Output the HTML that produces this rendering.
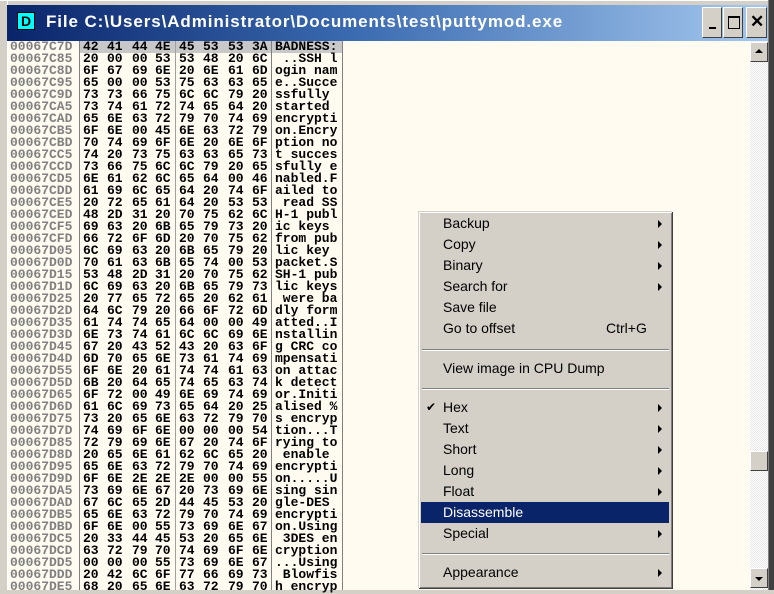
<!DOCTYPE html>
<html><head><style>
body{margin:0;width:774px;height:590px;overflow:hidden;background:#d4d0c8;position:relative;font-family:"Liberation Sans",sans-serif}
.a{position:absolute}
#tb{left:7px;top:5px;width:767px;height:36px;background:linear-gradient(90deg,#0a246a 0%,#3a6ab0 45%,#a6caf0 100%)}
.btn{position:absolute;top:7px;width:20px;height:31px;background:#d4d0c8;border-top:1px solid #fff;border-left:1px solid #fff;border-right:1px solid #404040;border-bottom:1px solid #404040;box-sizing:border-box}
#ct{left:8px;top:41px;width:742px;height:549px;background:#fffbf0}
.row{position:absolute;left:0;height:12px;width:340px;font:bold 13px/12px "Liberation Mono",monospace;white-space:pre}
.row span{position:absolute;top:0}
.ad{left:2px;color:#808080}
.as{left:267px;color:#000}
.vl{position:absolute;top:0;width:1px;height:549px;background:#808080}
#menu{left:418px;top:211px;width:253px;height:376px;background:#d4d0c8;border-top:1px solid #d4d0c8;border-left:1px solid #d4d0c8;box-shadow:inset 1px 1px #fff,1px 1px #404040,inset -1px -1px #808080}
.mi{position:absolute;left:24px;font-size:14px;line-height:21px;color:#000}
.ar{position:absolute;left:239px;width:0;height:0;border-left:4px solid #000;border-top:4px solid transparent;border-bottom:4px solid transparent}
.sep{position:absolute;left:3px;width:247px;height:0;border-top:1px solid #808080;border-bottom:1px solid #fff}
</style></head><body>
<div class="a" style="left:0;top:0;width:774px;height:1px;background:#fff"></div>
<div class="a" style="left:7px;top:0;width:1px;height:590px;background:#fff"></div>
<div id="tb" class="a">
<div class="a" style="left:10px;top:7px;width:16px;height:16px;background:#00ffff;border:1px solid #000;font:bold 14px/16px 'Liberation Sans',sans-serif;text-align:center;color:#000">D</div>
<div class="a" style="left:39px;top:7px;color:#fff;font:bold 17px/20px 'Liberation Sans',sans-serif;letter-spacing:0.9px;white-space:nowrap">File C:\Users\Administrator\Documents\test\puttymod.exe</div>
</div>
<div class="btn" style="left:702px"><div class="a" style="left:6px;top:19px;width:7px;height:2px;background:#000"></div></div>
<div class="btn" style="left:723px"><div class="a" style="left:4px;top:8px;width:10px;height:10px;border:1px solid #000;border-top-width:2px"></div></div>
<div class="btn" style="left:746px;width:21px"><div class="a" style="left:3px;top:3px;font:bold 17px/22px 'Liberation Sans',sans-serif">✕</div></div>
<div class="a" style="left:768px;top:0;width:6px;height:590px;background:#404040;border-left:1px solid #808080"></div>
<div id="ct" class="a">
<div class="a" style="left:72px;top:0;width:262px;height:12px;background:#c8c8c8"></div>
<div class="vl" style="left:71px"></div>
<div class="vl" style="left:167px;background:#a0a0a0"></div>
<div class="vl" style="left:263px"></div>
<div class="vl" style="left:334px"></div>
<div id="rows"></div>
</div>
<div class="a" style="left:750px;top:41px;width:18px;height:549px;background:repeating-conic-gradient(#e8e8e8 0 25%,#fff 0 50%) 0 0/2px 2px"></div>
<div class="btn" style="left:750px;top:42px;width:18px;height:20px"><div class="a" style="left:4px;top:6px;border-bottom:4px solid #000;border-left:4px solid transparent;border-right:4px solid transparent"></div></div>
<div class="btn" style="left:750px;top:451px;width:18px;height:20px"></div>
<div class="btn" style="left:750px;top:568px;width:18px;height:20px"><div class="a" style="left:4px;top:8px;border-top:4px solid #000;border-left:4px solid transparent;border-right:4px solid transparent"></div></div>
<div id="menu" class="a">
<div class="mi" style="top:1px">Backup</div><div class="ar" style="top:8px"></div>
<div class="mi" style="top:22px">Copy</div><div class="ar" style="top:29px"></div>
<div class="mi" style="top:43px">Binary</div><div class="ar" style="top:50px"></div>
<div class="mi" style="top:64px">Search for</div><div class="ar" style="top:71px"></div>
<div class="mi" style="top:85px">Save file</div>
<div class="mi" style="top:106px">Go to offset</div><div class="mi" style="top:106px;left:187px">Ctrl+G</div>
<div class="sep" style="top:137px"></div>
<div class="mi" style="top:146px">View image in CPU Dump</div>
<div class="sep" style="top:176px"></div>
<div class="mi" style="top:185px;left:7px;font-size:12px">✔</div>
<div class="mi" style="top:185px">Hex</div><div class="ar" style="top:192px"></div>
<div class="mi" style="top:206px">Text</div><div class="ar" style="top:213px"></div>
<div class="mi" style="top:227px">Short</div><div class="ar" style="top:234px"></div>
<div class="mi" style="top:248px">Long</div><div class="ar" style="top:255px"></div>
<div class="mi" style="top:269px">Float</div><div class="ar" style="top:276px"></div>
<div class="a" style="left:2px;top:290px;width:248px;height:21px;background:#0a246a"></div>
<div class="mi" style="top:290px;color:#fff">Disassemble</div>
<div class="mi" style="top:311px">Special</div><div class="ar" style="top:318px"></div>
<div class="sep" style="top:341px"></div>
<div class="mi" style="top:350px">Appearance</div><div class="ar" style="top:357px"></div>
</div>
<script>
var d=[["7C7D","42 41 44 4E 45 53 53 3A","BADNESS:"],["7C85","20 00 00 53 53 48 20 6C"," ..SSH l"],["7C8D","6F 67 69 6E 20 6E 61 6D","ogin nam"],["7C95","65 00 00 53 75 63 63 65","e..Succe"],["7C9D","73 73 66 75 6C 6C 79 20","ssfully "],["7CA5","73 74 61 72 74 65 64 20","started "],["7CAD","65 6E 63 72 79 70 74 69","encrypti"],["7CB5","6F 6E 00 45 6E 63 72 79","on.Encry"],["7CBD","70 74 69 6F 6E 20 6E 6F","ption no"],["7CC5","74 20 73 75 63 63 65 73","t succes"],["7CCD","73 66 75 6C 6C 79 20 65","sfully e"],["7CD5","6E 61 62 6C 65 64 00 46","nabled.F"],["7CDD","61 69 6C 65 64 20 74 6F","ailed to"],["7CE5","20 72 65 61 64 20 53 53"," read SS"],["7CED","48 2D 31 20 70 75 62 6C","H-1 publ"],["7CF5","69 63 20 6B 65 79 73 20","ic keys "],["7CFD","66 72 6F 6D 20 70 75 62","from pub"],["7D05","6C 69 63 20 6B 65 79 20","lic key "],["7D0D","70 61 63 6B 65 74 00 53","packet.S"],["7D15","53 48 2D 31 20 70 75 62","SH-1 pub"],["7D1D","6C 69 63 20 6B 65 79 73","lic keys"],["7D25","20 77 65 72 65 20 62 61"," were ba"],["7D2D","64 6C 79 20 66 6F 72 6D","dly form"],["7D35","61 74 74 65 64 00 00 49","atted..I"],["7D3D","6E 73 74 61 6C 6C 69 6E","nstallin"],["7D45","67 20 43 52 43 20 63 6F","g CRC co"],["7D4D","6D 70 65 6E 73 61 74 69","mpensati"],["7D55","6F 6E 20 61 74 74 61 63","on attac"],["7D5D","6B 20 64 65 74 65 63 74","k detect"],["7D65","6F 72 00 49 6E 69 74 69","or.Initi"],["7D6D","61 6C 69 73 65 64 20 25","alised %"],["7D75","73 20 65 6E 63 72 79 70","s encryp"],["7D7D","74 69 6F 6E 00 00 00 54","tion...T"],["7D85","72 79 69 6E 67 20 74 6F","rying to"],["7D8D","20 65 6E 61 62 6C 65 20"," enable "],["7D95","65 6E 63 72 79 70 74 69","encrypti"],["7D9D","6F 6E 2E 2E 2E 00 00 55","on.....U"],["7DA5","73 69 6E 67 20 73 69 6E","sing sin"],["7DAD","67 6C 65 2D 44 45 53 20","gle-DES "],["7DB5","65 6E 63 72 79 70 74 69","encrypti"],["7DBD","6F 6E 00 55 73 69 6E 67","on.Using"],["7DC5","20 33 44 45 53 20 65 6E"," 3DES en"],["7DCD","63 72 79 70 74 69 6F 6E","cryption"],["7DD5","00 00 00 55 73 69 6E 67","...Using"],["7DDD","20 42 6C 6F 77 66 69 73"," Blowfis"],["7DE5","68 20 65 6E 63 72 79 70","h encryp"]];
var xs=[75,99,124,147,171,195,220,244];
var h="";d.forEach(function(r,i){h+='<div class="row" style="top:'+(i*12)+'px"><span class="ad">0006'+r[0]+'</span>';r[1].split(" ").forEach(function(b,j){h+='<span style="left:'+xs[j]+'px">'+b+'</span>'});h+='<span class="as">'+r[2]+'</span></div>'});
document.getElementById("rows").innerHTML=h;
</script>
</body></html>
